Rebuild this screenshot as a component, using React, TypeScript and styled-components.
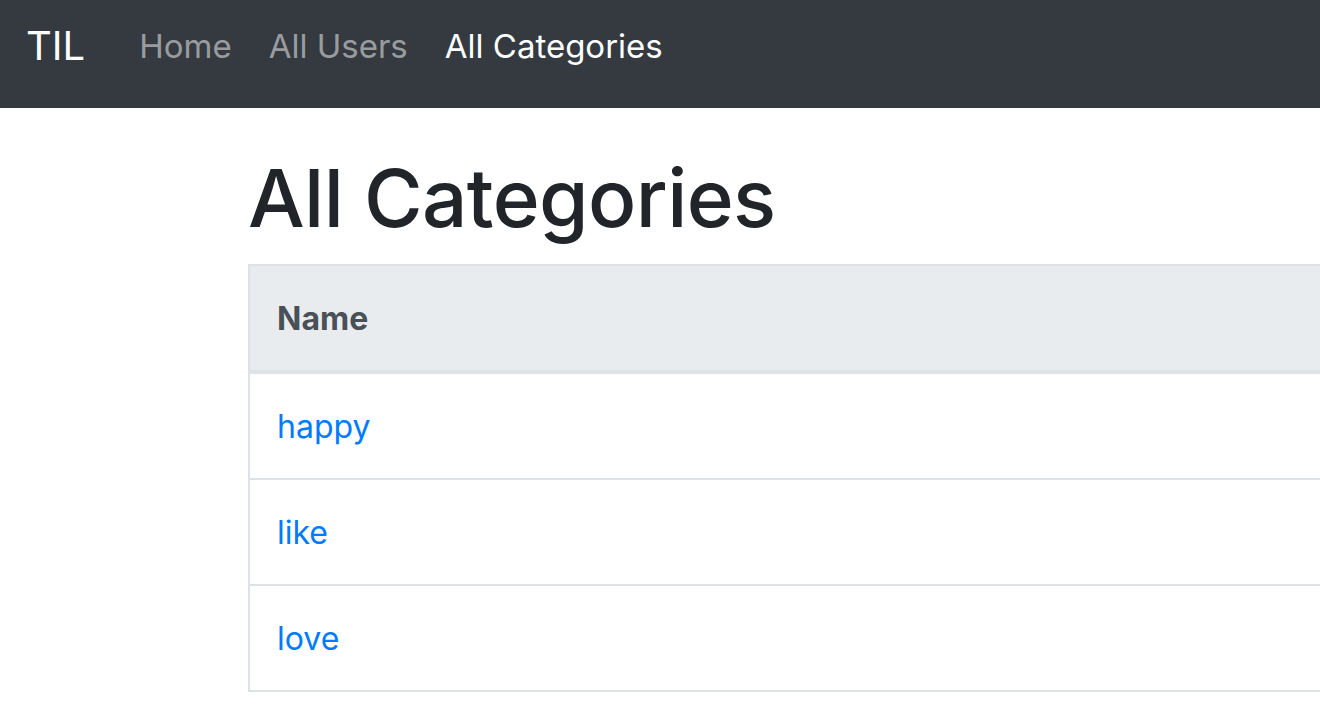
import React from "react";
import styled, { createGlobalStyle } from "styled-components";

const GlobalStyle = createGlobalStyle`
  html, body {
    margin: 0;
    padding: 0;
    overflow: hidden;
    background: #fff;
    font-family: Inter, "Noto Sans", "Liberation Sans", sans-serif;
    color: #212529;
  }
`;

const categories = ["happy", "like", "love"];

const Navbar = styled.nav`
  display: flex;
  align-items: center;
  box-sizing: border-box;
  height: 108px;
  padding: 0 0 17px 26px;
  background: #343a40;
`;

const Brand = styled.a`
  font-size: 40px;
  color: #fff;
  margin-right: 54px;
  text-decoration: none;
`;

const NavList = styled.div`
  display: flex;
  gap: 37px;
`;

const NavLink = styled.a<{ $active?: boolean }>`
  font-size: 33px;
  color: ${(p) => (p.$active ? "#fff" : "rgba(255, 255, 255, 0.5)")};
  text-decoration: none;
`;

const Main = styled.main`
  padding-left: 248px;
`;

const Title = styled.h1`
  margin: 42px 0 18px;
  font-size: 80px;
  font-weight: 500;
  line-height: 96px;
  letter-spacing: -0.6px;
`;

const Table = styled.table`
  width: 1100px;
  border-collapse: collapse;
  border: 2px solid #dee2e6;
  font-size: 32px;
`;

const HeadCell = styled.th`
  height: 104px;
  padding: 0 27px;
  text-align: left;
  font-weight: 700;
  color: #495057;
  background: #e9ecef;
  border-bottom: 4px solid #dee2e6;
`;

const Cell = styled.td`
  height: 104px;
  padding: 0 27px;
  border-top: 2px solid #dee2e6;
`;

const CategoryLink = styled.a`
  color: #007bff;
  text-decoration: none;
`;

export default function App() {
  return (
    <>
      <GlobalStyle />
      <Navbar>
        <Brand href="#">TIL</Brand>
        <NavList>
          <NavLink href="#">Home</NavLink>
          <NavLink href="#">All Users</NavLink>
          <NavLink href="#" $active>
            All Categories
          </NavLink>
        </NavList>
      </Navbar>
      <Main>
        <Title>All Categories</Title>
        <Table>
          <thead>
            <tr>
              <HeadCell>Name</HeadCell>
            </tr>
          </thead>
          <tbody>
            {categories.map((c) => (
              <tr key={c}>
                <Cell>
                  <CategoryLink href="#">{c}</CategoryLink>
                </Cell>
              </tr>
            ))}
          </tbody>
        </Table>
      </Main>
    </>
  );
}
